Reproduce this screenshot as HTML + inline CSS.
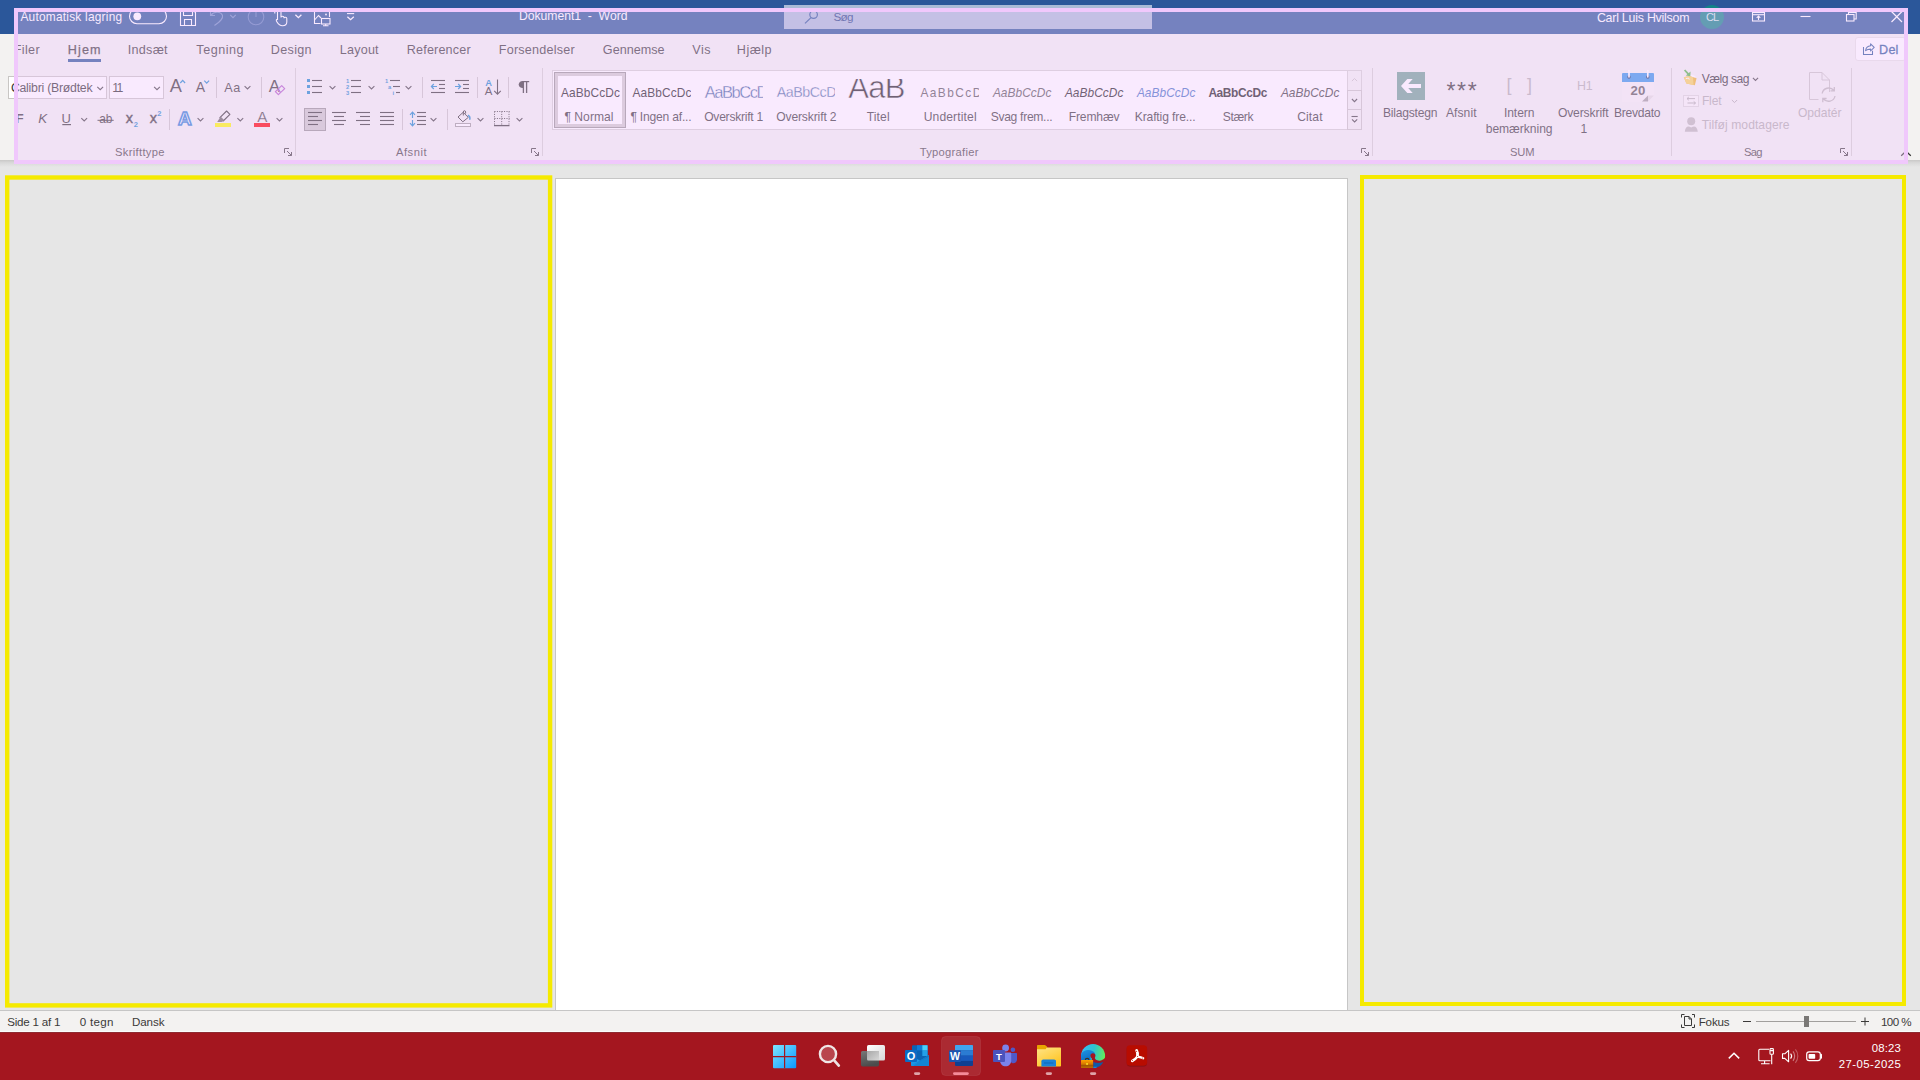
<!DOCTYPE html><html lang="da"><head><meta charset="utf-8"><title>Dokument1 - Word</title><style>
*{margin:0;padding:0;box-sizing:border-box}
html,body{width:1920px;height:1080px;overflow:hidden;background:#e6e6e6}
body{position:relative;font-family:"Liberation Sans",sans-serif;}
.a{position:absolute}
.t{position:absolute;white-space:pre;line-height:16px;height:16px}
svg{position:absolute;left:0;top:0;overflow:visible}
#titlebar{left:0;top:0;width:1920px;height:34px;background:#2b579a}
#ribbon{left:0;top:34px;width:1920px;height:126px;background:#f3f2f1}
#rshadow{left:0;top:160px;width:1920px;height:7px;background:linear-gradient(#c9c8c7,#d9d9d9 40%,#e6e6e6)}
#page{left:555px;top:178px;width:793px;height:833px;background:#fff;border:1px solid #c6c6c6;border-bottom:none}
#status{left:0;top:1010px;width:1920px;height:22px;background:#f3f2f1;border-top:1px solid #c6c6c6;border-bottom:1px solid #fbfbfb}
#taskbar{left:0;top:1032px;width:1920px;height:48px;background:#a4161f;border-top:1px solid #8e2a31}
#ov{left:14px;top:8px;width:1894px;height:156px;border:4px solid #f0c8fc;background:rgba(240,200,252,0.38)}
</style></head><body>
<div class="a" id="titlebar"></div><div class="a" id="ribbon"></div><div class="a" id="rshadow"></div>
<div class="a" id="page"></div><div class="a" id="status"></div><div class="a" id="taskbar"></div>
<span class="t" style="left:20.41px;top:9.00px;font-size:11.9px;color:#fff;letter-spacing:0.229px;">Automatisk lagring</span>
<span class="t" style="left:518.89px;top:8.00px;font-size:12.2px;color:#fff;letter-spacing:-0.013px;">Dokument1  -  Word</span>
<span class="t" style="left:1596.88px;top:10.00px;font-size:12.4px;color:#fff;letter-spacing:-0.233px;">Carl Luis Hvilsom</span>
<div class="a" style="left:784px;top:5px;width:368px;height:24px;background:#aabbd7"></div>
<span class="t" style="left:833.41px;top:9.00px;font-size:11.7px;color:#1f4585;letter-spacing:-0.644px;">Søg</span>
<div class="a" style="left:1700px;top:5px;width:24px;height:24px;border-radius:50%;background:#0f8387"></div>
<span class="t" style="left:1705.95px;top:9.00px;font-size:11px;color:#cfe8ea;letter-spacing:-0.962px;">CL</span>
<div class="a" style="left:1855px;top:37px;width:51px;height:24px;background:#fff;border:1px solid #e6e4e2;border-radius:3px"></div>
<svg width="1920" height="70" viewBox="0 0 1920 70" fill="none" stroke="#fff" stroke-width="1.1"><rect x="129.5" y="8.7" width="37" height="15" rx="7.5"/><circle cx="137.3" cy="16.3" r="3.9" fill="#fff" stroke="none"/><path d="M180.5 9.5H192.5L195.5 12.5V25.5H180.5Z"/><path d="M183.5 9.5V15.5H192.5V9.5"/><path d="M184.5 25.5V19.5H191.5V25.5"/><g stroke="#6f8ec3"><path d="M210.5 11V15.5H215"/><path d="M210.8 15.3C214 11 221 11.5 222.5 15.5C223.5 19 219 22 214.5 25.5"/></g><path d="M230.2 14.799999999999999L233 17.599999999999998L235.8 14.799999999999999" stroke="#6f8ec3" stroke-width="1.1" fill="none"/><g stroke="#5f81bb"><circle cx="256" cy="17" r="7.8"/><path d="M256 9V17"/></g><path d="M277.5 19.5V11.4C277.5 9.4 281 9.4 281 11.4V17.5C281 15.8 284 15.8 284 17.5V18.2C284 16.8 286.8 16.8 286.8 18.5V22C286.8 24.5 285 25.7 282.5 25.7C279.5 25.7 278.5 24.5 277 22C275.8 20.2 276.3 19 277.5 19.5Z"/><path d="M275 13.5C274.3 11.4 275.3 9.6 277 9"/><path d="M295.4 14.7L298.4 17.7L301.4 14.7" stroke="#fff" stroke-width="1.3" fill="none"/><path d="M320.5 23.5H314.5V11.5H329.5V17"/><path d="M314.5 20L318.5 15.5L321 18"/><circle cx="326" cy="14.5" r="0.9" fill="#fff" stroke="none"/><rect x="321.5" y="18.5" width="8.5" height="5.5"/><path d="M325.7 24V25.8M323 25.8H328.5"/><path d="M347 13.6H354.2"/><path d="M347.40000000000003 16.7L350.6 19.7L353.8 16.7" stroke="#fff" stroke-width="1.3" fill="none"/><g stroke="#2b579a" stroke-width="1.2"><circle cx="813.6" cy="14.6" r="3.8"/><path d="M811 17.6L805 23.4"/></g><rect x="1752.5" y="12.5" width="12" height="8.5"/><path d="M1752.5 14.7H1764.5"/><path d="M1758.5 20V16.2M1756.7 17.8L1758.5 16L1760.3 17.8"/><path d="M1800.5 16.5H1810.5"/><rect x="1846.5" y="14.5" width="7.5" height="6.5"/><path d="M1848.5 14.5V12.5H1856.2V19H1854"/><path d="M1891.5 11.5L1902 22M1902 11.5L1891.5 22" stroke-width="1.2"/><rect x="68" y="59" width="33" height="3" fill="#2b579a" stroke="none"/><g stroke="#2b579a" stroke-width="1.05"><path d="M1863.5 47V54.5H1872.5V50.8"/><path d="M1865.6 50.6C1866 47.8 1868 46 1870.6 45.8V43.8L1874.2 47.4L1870.6 51V49.1C1868.6 49.1 1866.9 49.6 1865.6 50.6Z" stroke-linejoin="round"/></g></svg>
<span class="t" style="left:13.87px;top:42.00px;font-size:12.6px;color:#3a3a3a;letter-spacing:0.315px;">Filer</span>
<span class="t" style="left:127.87px;top:42.00px;font-size:12.6px;color:#3a3a3a;letter-spacing:0.248px;">Indsæt</span>
<span class="t" style="left:196.37px;top:42.00px;font-size:12.6px;color:#3a3a3a;letter-spacing:0.520px;">Tegning</span>
<span class="t" style="left:270.87px;top:42.00px;font-size:12.6px;color:#3a3a3a;letter-spacing:0.308px;">Design</span>
<span class="t" style="left:339.87px;top:42.00px;font-size:12.6px;color:#3a3a3a;letter-spacing:0.186px;">Layout</span>
<span class="t" style="left:406.87px;top:42.00px;font-size:12.6px;color:#3a3a3a;letter-spacing:0.159px;">Referencer</span>
<span class="t" style="left:498.87px;top:42.00px;font-size:12.6px;color:#3a3a3a;letter-spacing:0.202px;">Forsendelser</span>
<span class="t" style="left:602.87px;top:42.00px;font-size:12.6px;color:#3a3a3a;letter-spacing:0.018px;">Gennemse</span>
<span class="t" style="left:692.37px;top:42.00px;font-size:12.6px;color:#3a3a3a;letter-spacing:0.492px;">Vis</span>
<span class="t" style="left:736.87px;top:42.00px;font-size:12.6px;color:#3a3a3a;letter-spacing:0.463px;">Hjælp</span>
<span class="t" style="left:67.87px;top:42.00px;font-size:12.6px;color:#3b3a39;letter-spacing:1.119px;-webkit-text-stroke:0.25px #3b3a39;">Hjem</span>
<span class="t" style="left:1879.07px;top:42.00px;font-size:12.6px;color:#2b579a;letter-spacing:0.227px;-webkit-text-stroke:0.3px #2b579a;">Del</span>
<div class="a" style="left:8px;top:76px;width:99px;height:23px;background:#fff;border:1px solid #c8c6c4"></div>
<div class="a" style="left:109px;top:76px;width:55px;height:23px;background:#fff;border:1px solid #c8c6c4"></div>
<span class="t" style="left:10.88px;top:80.00px;font-size:12.3px;color:#333;letter-spacing:-0.247px;">Calibri (Brødtek</span>
<span class="t" style="left:112.27px;top:80.00px;font-size:12.3px;color:#333;letter-spacing:-1.6px;">11</span>
<span class="t" style="left:15.48px;top:111.00px;font-size:13.4px;color:#3b3a39;font-weight:bold;">F</span>
<span class="t" style="left:38.33px;top:111.00px;font-size:13.4px;color:#3b3a39;font-style:italic;">K</span>
<span class="t" style="left:61.42px;top:111.00px;font-size:13px;color:#3b3a39;">U</span>
<span class="t" style="left:99.20px;top:111.00px;font-size:11.9px;color:#3b3a39;letter-spacing:-0.147px;">ab</span>
<span class="t" style="left:125.78px;top:110.00px;font-size:14.5px;color:#3b3a39;-webkit-text-stroke:0.4px #3b3a39;">x</span>
<span class="t" style="left:133.81px;top:117.00px;font-size:7.5px;color:#1e8bcd;font-weight:bold;">2</span>
<span class="t" style="left:149.78px;top:110.00px;font-size:14.5px;color:#3b3a39;-webkit-text-stroke:0.4px #3b3a39;">x</span>
<span class="t" style="left:157.31px;top:106.00px;font-size:7.5px;color:#1e8bcd;font-weight:bold;">2</span>
<span class="t" style="left:169.85px;top:78.00px;font-size:18.2px;color:#3b3a39;">A</span>
<span class="t" style="left:195.68px;top:79.00px;font-size:14px;color:#3b3a39;">A</span>
<span class="t" style="left:224.29px;top:80.00px;font-size:12.6px;color:#3b3a39;letter-spacing:0.508px;">Aa</span>
<span class="t" style="left:268.86px;top:79.00px;font-size:17px;color:#3b3a39;">A</span>
<span class="t" style="left:257.17px;top:109.00px;font-size:15.2px;color:#3b3a39;-webkit-text-stroke:0.18px #f3f2f1;">A</span>
<span class="t" style="left:177.98px;top:111.00px;font-size:19px;color:#fff;font-weight:bold;-webkit-text-stroke:1.5px #2f7fd3;text-shadow:0 0 1.5px #7fb2e8;">A</span>
<span class="t" style="left:114.94px;top:144.00px;font-size:11.2px;color:#484644;letter-spacing:0.327px;">Skrifttype</span>
<span class="t" style="left:395.94px;top:144.00px;font-size:11.2px;color:#484644;letter-spacing:0.522px;">Afsnit</span>
<svg width="1920" height="170" viewBox="0 0 1920 170" fill="none"><path d="M97.3 86.85L100.2 89.75L103.10000000000001 86.85" stroke="#444" stroke-width="1.1" fill="none"/><path d="M154.1 86.85L157 89.75L159.9 86.85" stroke="#444" stroke-width="1.1" fill="none"/><path d="M62.3 124.6H71" stroke="#3b3a39" stroke-width="1.2"/><path d="M81.3 118.05L84.2 120.95L87.10000000000001 118.05" stroke="#444" stroke-width="1.1" fill="none"/><path d="M97.5 120.3H113.7" stroke="#3b3a39" stroke-width="1"/><path d="M180.3 83L182.7 80.4L185.1 83" stroke="#1e8bcd" stroke-width="1.2"/><path d="M204.3 80.6L206.7 83.2L209.1 80.6" stroke="#1e8bcd" stroke-width="1.2"/><path d="M216.5 77V98" stroke="#c8c6c4" stroke-width="1"/><path d="M244.6 86.05L247.5 88.95L250.4 86.05" stroke="#444" stroke-width="1.1" fill="none"/><path d="M261.5 77V98" stroke="#c8c6c4" stroke-width="1"/><path d="M281.7 85.6L284.7 88.6L278.4 94.6L275.4 91.6Z" stroke="#b15fc7" stroke-width="1.2" stroke-linejoin="round"/><path d="M277.6 89.5L280.6 92.5" stroke="#b15fc7" stroke-width="1.1"/><path d="M169.5 109V130" stroke="#c8c6c4" stroke-width="1"/><path d="M197.6 118.05L200.5 120.95L203.4 118.05" stroke="#444" stroke-width="1.1" fill="none"/><path d="M237.4 118.05L240.3 120.95L243.20000000000002 118.05" stroke="#444" stroke-width="1.1" fill="none"/><path d="M276.6 118.05L279.5 120.95L282.4 118.05" stroke="#444" stroke-width="1.1" fill="none"/><path d="M226.6 111L229.9 114.3L223.2 121L219.9 117.7Z" stroke="#3b3a39" stroke-width="1.1" stroke-linejoin="round"/><path d="M220.8 116.8L224.1 120.1L223.2 121L221.6 121.9L217.2 122L219.9 117.7Z" fill="#6b6967"/><rect x="215" y="123" width="16" height="4" fill="#ffff00"/><rect x="254" y="123" width="16" height="4" fill="#ff0000"/><path d="M295.5 68V156" stroke="#d2d0ce" stroke-width="1"/><path d="M542.5 68V156" stroke="#d2d0ce" stroke-width="1"/><path d="M284.5 153V148.5H289" stroke="#484644" fill="none"/><path d="M287 151L291.5 155.5M288 155.5H291.5V152" stroke="#484644" fill="none"/><path d="M531.5 153V148.5H536" stroke="#484644" fill="none"/><path d="M534 151L538.5 155.5M535 155.5H538.5V152" stroke="#484644" fill="none"/><rect x="307" y="79.0" width="3" height="3" fill="#1e8bcd"/><path d="M312 80.5H322" stroke="#3b3a39" stroke-width="1.1"/><path d="M351 80.5H361" stroke="#3b3a39" stroke-width="1.1"/><rect x="307" y="85.0" width="3" height="3" fill="#1e8bcd"/><path d="M312 86.5H322" stroke="#3b3a39" stroke-width="1.1"/><path d="M351 86.5H361" stroke="#3b3a39" stroke-width="1.1"/><rect x="307" y="91.0" width="3" height="3" fill="#1e8bcd"/><path d="M312 92.5H322" stroke="#3b3a39" stroke-width="1.1"/><path d="M351 92.5H361" stroke="#3b3a39" stroke-width="1.1"/><path d="M329.6 86.05L332.5 88.95L335.4 86.05" stroke="#444" stroke-width="1.1" fill="none"/><path d="M368.6 86.05L371.5 88.95L374.4 86.05" stroke="#444" stroke-width="1.1" fill="none"/><path d="M405.6 86.05L408.5 88.95L411.4 86.05" stroke="#444" stroke-width="1.1" fill="none"/><path d="M390 80.5H400" stroke="#3b3a39" stroke-width="1.1"/><path d="M393 86.5H400" stroke="#3b3a39" stroke-width="1.1"/><path d="M396 92.5H400" stroke="#3b3a39" stroke-width="1.1"/><path d="M422.5 77V98" stroke="#c8c6c4" stroke-width="1"/><path d="M431 80.5H445" stroke="#3b3a39" stroke-width="1.1"/><path d="M431 92.5H445" stroke="#3b3a39" stroke-width="1.1"/><path d="M439 84.5H445" stroke="#3b3a39" stroke-width="1.1"/><path d="M439 88.5H445" stroke="#3b3a39" stroke-width="1.1"/><path d="M455 80.5H469" stroke="#3b3a39" stroke-width="1.1"/><path d="M455 92.5H469" stroke="#3b3a39" stroke-width="1.1"/><path d="M463 84.5H469" stroke="#3b3a39" stroke-width="1.1"/><path d="M463 88.5H469" stroke="#3b3a39" stroke-width="1.1"/><path d="M431.5 86.5H437M433.8 84L431.4 86.5L433.8 89" stroke="#1e8bcd" stroke-width="1.2"/><path d="M455 86.5H460.6M458.2 84L460.6 86.5L458.2 89" stroke="#1e8bcd" stroke-width="1.2"/><path d="M477.5 77V98" stroke="#c8c6c4" stroke-width="1"/><path d="M497.5 79.5V94M494.2 90.8L497.5 94.2L500.8 90.8" stroke="#3b3a39" stroke-width="1.1"/><path d="M508.5 77V98" stroke="#c8c6c4" stroke-width="1"/><path d="M523.6 81H522.6C520.4 81 518.7 82.5 518.7 84.6C518.7 86.7 520.4 88.1 522.6 88.1H523.6Z" fill="#3b3a39"/><path d="M522.6 81.6H529.2" stroke="#3b3a39" stroke-width="1.2"/><path d="M523.4 81.6V93M526.6 81.6V93" stroke="#3b3a39" stroke-width="1.3"/><rect x="304.5" y="108.5" width="21" height="22" fill="#cccac8" stroke="#979593"/><path d="M308 112.5H322" stroke="#3b3a39" stroke-width="1.1"/><path d="M332 112.5H346" stroke="#3b3a39" stroke-width="1.1"/><path d="M356 112.5H370" stroke="#3b3a39" stroke-width="1.1"/><path d="M380 112.5H394" stroke="#3b3a39" stroke-width="1.1"/><path d="M417 112.5H426" stroke="#3b3a39" stroke-width="1.1"/><path d="M308 116.5H318" stroke="#3b3a39" stroke-width="1.1"/><path d="M334 116.5H344" stroke="#3b3a39" stroke-width="1.1"/><path d="M360 116.5H370" stroke="#3b3a39" stroke-width="1.1"/><path d="M380 116.5H394" stroke="#3b3a39" stroke-width="1.1"/><path d="M417 116.5H426" stroke="#3b3a39" stroke-width="1.1"/><path d="M308 120.5H322" stroke="#3b3a39" stroke-width="1.1"/><path d="M332 120.5H346" stroke="#3b3a39" stroke-width="1.1"/><path d="M356 120.5H370" stroke="#3b3a39" stroke-width="1.1"/><path d="M380 120.5H394" stroke="#3b3a39" stroke-width="1.1"/><path d="M417 120.5H426" stroke="#3b3a39" stroke-width="1.1"/><path d="M308 124.5H318" stroke="#3b3a39" stroke-width="1.1"/><path d="M334 124.5H344" stroke="#3b3a39" stroke-width="1.1"/><path d="M360 124.5H370" stroke="#3b3a39" stroke-width="1.1"/><path d="M380 124.5H394" stroke="#3b3a39" stroke-width="1.1"/><path d="M417 124.5H426" stroke="#3b3a39" stroke-width="1.1"/><path d="M402.5 109V130" stroke="#c8c6c4" stroke-width="1"/><path d="M412.5 112.5V118M410 114.8L412.5 112.2L415 114.8M412.5 120V125.5M410 123.2L412.5 125.8L415 123.2" stroke="#1e8bcd" stroke-width="1.2"/><path d="M430.6 118.05L433.5 120.95L436.4 118.05" stroke="#444" stroke-width="1.1" fill="none"/><path d="M447.5 109V130" stroke="#c8c6c4" stroke-width="1"/><path d="M463.2 112.3L468.3 117.4L462.8 121.8L458 117Z" stroke="#3b3a39" stroke-width="1"/><path d="M463.3 115.5V112C463.3 110.2 465.6 110.2 465.6 112V113.6" stroke="#3b3a39" stroke-width="1"/><path d="M467.8 115.2C469.8 116 470.2 118 469.6 119.8" stroke="#1e8bcd" stroke-width="1.5"/><rect x="455.5" y="123.5" width="15" height="3" fill="#fff" stroke="#a19f9d"/><path d="M477.6 118.05L480.5 120.95L483.4 118.05" stroke="#444" stroke-width="1.1" fill="none"/><path d="M494.5 111.5H509.5M494.5 118.5H509.5M494.5 111.5V125M509 111.5V125M501.7 111.5V125" stroke="#3b3a39" stroke-width="1" stroke-dasharray="1 1.4"/><path d="M494 125.6H509.5" stroke="#3b3a39" stroke-width="1.3"/><path d="M516.6 118.05L519.5 120.95L522.4 118.05" stroke="#444" stroke-width="1.1" fill="none"/></svg>
<span class="t" style="left:345.90px;top:73.00px;font-size:5.8px;color:#1e8bcd;font-weight:bold;">1</span>
<span class="t" style="left:345.90px;top:79.00px;font-size:5.8px;color:#1e8bcd;font-weight:bold;">2</span>
<span class="t" style="left:345.90px;top:85.00px;font-size:5.8px;color:#1e8bcd;font-weight:bold;">3</span>
<span class="t" style="left:385.10px;top:73.00px;font-size:5.8px;color:#1e8bcd;font-weight:bold;">1</span>
<span class="t" style="left:387.90px;top:79.00px;font-size:5.8px;color:#1e8bcd;font-weight:bold;">a</span>
<span class="t" style="left:392.50px;top:85.00px;font-size:5.8px;color:#1e8bcd;font-weight:bold;">i</span>
<span class="t" style="left:485.16px;top:75.00px;font-size:9.4px;color:#1e8bcd;font-weight:bold;">A</span>
<span class="t" style="left:484.80px;top:83.00px;font-size:11.4px;color:#3b3a39;">A</span>
<div class="a" style="left:552px;top:70px;width:796px;height:60px;background:#fff;border:1px solid #d4d2d0"></div>
<div class="a" style="left:1347px;top:70px;width:15px;height:21px;background:#f3f2f1;border:1px solid #d4d2d0"></div>
<div class="a" style="left:1347px;top:90px;width:15px;height:20px;background:#f3f2f1;border:1px solid #c8c6c4"></div>
<div class="a" style="left:1347px;top:109px;width:15px;height:21px;background:#f3f2f1;border:1px solid #c8c6c4"></div>
<div class="a" style="left:554px;top:72px;width:72px;height:56px;border:1px solid #979593;background:#fff;box-shadow:inset 0 0 0 3px #d0cecc"></div>
<div class="a" style="left:558.3px;top:70.5px;width:61.7px;height:58.0px;overflow:hidden"><span class="t" style="left:2.60px;top:14.50px;font-size:11.9px;color:#222;letter-spacing:0.114px;">AaBbCcDc</span></div>
<div class="a" style="left:629.8px;top:70.5px;width:61.7px;height:58.0px;overflow:hidden"><span class="t" style="left:2.60px;top:14.50px;font-size:11.9px;color:#222;letter-spacing:0.114px;">AaBbCcDc</span></div>
<div class="a" style="left:702.3px;top:70.5px;width:61.0px;height:58.0px;overflow:hidden"><span class="t" style="left:2.45px;top:14.50px;font-size:16.6px;color:#2f5496;letter-spacing:-1.518px;-webkit-text-stroke:0.3px #fff;">AaBbCcDd</span></div>
<div class="a" style="left:774.3px;top:70.5px;width:61.0px;height:58.0px;overflow:hidden"><span class="t" style="left:2.52px;top:13.50px;font-size:14.3px;color:#2f5496;letter-spacing:-0.501px;-webkit-text-stroke:0.3px #fff;">AaBbCcDd</span></div>
<div class="a" style="left:846.3px;top:79px;width:59.7px;height:49.5px;overflow:hidden"><span class="t" style="left:1.97px;top:1.00px;font-size:31px;color:#222;letter-spacing:-0.764px;-webkit-text-stroke:0.55px #fff;">AaBb</span></div>
<div class="a" style="left:917.8px;top:70.5px;width:61.5px;height:58.0px;overflow:hidden"><span class="t" style="left:2.60px;top:14.50px;font-size:11.9px;color:#5a5a5a;letter-spacing:1.457px;">AaBbCcDd</span></div>
<div class="a" style="left:990.3px;top:70.5px;width:61.7px;height:58.0px;overflow:hidden"><span class="t" style="left:2.60px;top:14.50px;font-size:11.9px;color:#595959;letter-spacing:0.042px;font-style:italic;">AaBbCcDc</span></div>
<div class="a" style="left:1062.3px;top:70.5px;width:61.7px;height:58.0px;overflow:hidden"><span class="t" style="left:2.60px;top:14.50px;font-size:11.9px;color:#222;letter-spacing:0.042px;font-style:italic;">AaBbCcDc</span></div>
<div class="a" style="left:1134.3px;top:70.5px;width:61.7px;height:58.0px;overflow:hidden"><span class="t" style="left:2.60px;top:14.50px;font-size:11.9px;color:#4472c4;letter-spacing:0.042px;font-style:italic;">AaBbCcDc</span></div>
<div class="a" style="left:1205.8px;top:70.5px;width:62.2px;height:58.0px;overflow:hidden"><span class="t" style="left:2.60px;top:14.50px;font-size:11.9px;color:#222;letter-spacing:-0.358px;font-weight:bold;">AaBbCcDc</span></div>
<div class="a" style="left:1278.3px;top:70.5px;width:61.7px;height:58.0px;overflow:hidden"><span class="t" style="left:2.60px;top:14.50px;font-size:11.9px;color:#404040;letter-spacing:0.042px;font-style:italic;">AaBbCcDc</span></div>
<span class="t" style="left:564.39px;top:109.00px;font-size:12.1px;color:#3a3a3a;letter-spacing:0.051px;">¶ Normal</span>
<span class="t" style="left:630.39px;top:109.00px;font-size:12.1px;color:#3a3a3a;letter-spacing:-0.206px;">¶ Ingen af...</span>
<span class="t" style="left:704.19px;top:109.00px;font-size:12.1px;color:#3a3a3a;letter-spacing:-0.249px;">Overskrift 1</span>
<span class="t" style="left:776.19px;top:109.00px;font-size:12.1px;color:#3a3a3a;letter-spacing:-0.131px;">Overskrift 2</span>
<span class="t" style="left:866.69px;top:109.00px;font-size:12.1px;color:#3a3a3a;letter-spacing:0.125px;">Titel</span>
<span class="t" style="left:923.69px;top:109.00px;font-size:12.1px;color:#3a3a3a;letter-spacing:0.125px;">Undertitel</span>
<span class="t" style="left:990.69px;top:109.00px;font-size:12.1px;color:#3a3a3a;letter-spacing:-0.302px;">Svag frem...</span>
<span class="t" style="left:1068.69px;top:109.00px;font-size:12.1px;color:#3a3a3a;letter-spacing:-0.143px;">Fremhæv</span>
<span class="t" style="left:1134.69px;top:109.00px;font-size:12.1px;color:#3a3a3a;letter-spacing:-0.125px;">Kraftig fre...</span>
<span class="t" style="left:1222.69px;top:109.00px;font-size:12.1px;color:#3a3a3a;letter-spacing:-0.340px;">Stærk</span>
<span class="t" style="left:1297.19px;top:109.00px;font-size:12.1px;color:#3a3a3a;letter-spacing:0.133px;">Citat</span>
<span class="t" style="left:919.74px;top:144.00px;font-size:11.2px;color:#484644;letter-spacing:0.279px;">Typografier</span>
<svg width="1920" height="170" viewBox="0 0 1920 170" fill="none"><path d="M1351.9 81.1L1354.5 78.5L1357.1 81.1" stroke="#c8c6c4" stroke-width="1.0" fill="none"/><path d="M1351.9 99.0L1354.5 101.6L1357.1 99.0" stroke="#444" stroke-width="1.1" fill="none"/><path d="M1351.5 116.5H1357.7" stroke="#444" stroke-width="1.1"/><path d="M1352.0 119.3L1354.6 121.89999999999999L1357.1999999999998 119.3" stroke="#444" stroke-width="1.1" fill="none"/><path d="M1361.5 153V148.5H1366" stroke="#484644" fill="none"/><path d="M1364 151L1368.5 155.5M1365 155.5H1368.5V152" stroke="#484644" fill="none"/><path d="M1372.5 68V156" stroke="#d2d0ce" stroke-width="1"/></svg>
<div class="a" style="left:1397px;top:72px;width:28px;height:28px;background:#72a395"></div>
<span class="t" style="left:1382.89px;top:105.00px;font-size:12.1px;color:#3a3a3a;letter-spacing:-0.200px;">Bilagstegn</span>
<span class="t" style="left:1446.48px;top:83.00px;font-size:23px;color:#3b3a39;letter-spacing:1.699px;">***</span>
<span class="t" style="left:1445.89px;top:105.00px;font-size:12.1px;color:#3a3a3a;letter-spacing:0.090px;">Afsnit</span>
<span class="t" style="left:1506.40px;top:77.00px;font-size:18px;color:#b4b2b0;">[</span>
<span class="t" style="left:1527.05px;top:77.00px;font-size:18px;color:#b4b2b0;">]</span>
<span class="t" style="left:1503.89px;top:105.00px;font-size:12.1px;color:#3a3a3a;letter-spacing:-0.046px;">Intern</span>
<span class="t" style="left:1485.69px;top:121.00px;font-size:12.1px;color:#3a3a3a;letter-spacing:-0.038px;">bemærkning</span>
<span class="t" style="left:1576.88px;top:78.00px;font-size:12.4px;color:#b4b2b0;letter-spacing:-0.111px;">H1</span>
<span class="t" style="left:1557.89px;top:105.00px;font-size:12.1px;color:#3a3a3a;letter-spacing:-0.117px;">Overskrift</span>
<span class="t" style="left:1580.49px;top:121.00px;font-size:12.1px;color:#3a3a3a;">1</span>
<span class="t" style="left:1613.89px;top:105.00px;font-size:12.1px;color:#3a3a3a;letter-spacing:-0.246px;">Brevdato</span>
<span class="t" style="left:1509.94px;top:144.00px;font-size:11.2px;color:#484644;letter-spacing:-0.134px;">SUM</span>
<div class="a" style="left:1622px;top:74px;width:32px;height:27.5px;background:#f5f4f3"></div>
<div class="a" style="left:1622px;top:73px;width:32px;height:8.7px;background:#3797e8;border-radius:1px 1px 0 0"></div>
<span class="t" style="left:1630.45px;top:83.00px;font-size:13.2px;color:#5c5a58;font-weight:bold;letter-spacing:0.3px;">20</span>
<span class="t" style="left:1701.69px;top:71.00px;font-size:12.1px;color:#333;letter-spacing:-0.458px;">Vælg sag</span>
<span class="t" style="left:1701.89px;top:93.00px;font-size:12.1px;color:#b1afad;letter-spacing:-0.154px;">Flet</span>
<span class="t" style="left:1701.69px;top:117.00px;font-size:12.1px;color:#b1afad;letter-spacing:0.063px;">Tilføj modtagere</span>
<span class="t" style="left:1797.89px;top:105.00px;font-size:12.1px;color:#b1afad;">Opdatér</span>
<span class="t" style="left:1743.94px;top:144.00px;font-size:11.2px;color:#484644;letter-spacing:-0.654px;">Sag</span>
<svg width="1920" height="170" viewBox="0 0 1920 170" fill="none"><path d="M1401 86L1407.3 79H1412.7L1408.2 84H1421V88H1408.2L1412.7 93H1407.3Z" fill="#fff"/><circle cx="1629" cy="77" r="1.7" fill="#1f3864"/><circle cx="1647.8" cy="77" r="1.7" fill="#1f3864"/><path d="M1629 70.5V76.8M1647.8 70.5V76.8" stroke="#fff" stroke-width="1.7" stroke-linecap="round"/><path d="M1654 95.5V101.7H1648Z" fill="#f3f2f1"/><path d="M1648 95.5H1654L1648 101.5Z" fill="#e3e1df"/><path d="M1642 101.5L1648 95.5V101.5Z" fill="#a19f9d"/><path d="M1671.5 68V156" stroke="#d2d0ce" stroke-width="1"/><path d="M1851.5 68V156" stroke="#d2d0ce" stroke-width="1"/><path d="M1690.5 74.5L1695.5 76L1694.5 80H1690Z" fill="#fff"/><path d="M1683.8 77.2L1689.5 76L1696.6 78.2L1694.8 85.2L1686.4 83.4Z" fill="#efb92c"/><path d="M1683.8 77.2L1689.5 76L1693 77.2L1693.6 84.9L1686.4 83.4Z" fill="#f8d75c"/><path d="M1685.8 78.6L1688.6 78L1689.2 79.6" stroke="#fff" stroke-width="1"/><path d="M1684.6 70L1689.3 75.2" stroke="#54b948" stroke-width="1.8"/><path d="M1690.6 71.6L1690.3 76.2L1685.8 75.6Z" fill="#54b948"/><path d="M1752.9 77.9L1755.5 80.5L1758.1 77.9" stroke="#444" stroke-width="1.1" fill="none"/><rect x="1683.5" y="95.5" width="15" height="11" stroke="#dcdad8" fill="#f8f7f6"/><path d="M1687 98.6H1695M1688.8 97L1687 98.6L1688.8 100.2M1695.5 103H1687.5M1693.7 101.4L1695.5 103L1693.7 104.6" stroke="#b1afad" stroke-width="1"/><path d="M1731.9 100.0L1734.5 102.6L1737.1 100.0" stroke="#b1afad" stroke-width="1.0" fill="none"/><circle cx="1691.2" cy="121.3" r="4" fill="#bdbbb9"/><path d="M1684.8 131.7C1685.5 126.5 1688 125.6 1691.2 127.6C1694.4 125.6 1697 126.5 1697.8 131.7Z" fill="#bdbbb9"/><path d="M1809.5 72.5H1822L1829.5 80V92M1818.5 99.5H1809.5V72.5M1822 72.5V80H1829.5" stroke="#c8c6c4" stroke-width="1"/><path d="M1822.2 93.5C1823 88 1830 86 1834 90.5M1834.3 87V90.8H1830.5M1835 96C1834 101.5 1827 103 1823.2 98.8M1822.8 102.3V98.5H1826.6" stroke="#bbb9b7" stroke-width="1.3"/><path d="M1840.5 153V148.5H1845" stroke="#484644" fill="none"/><path d="M1843 151L1847.5 155.5M1844 155.5H1847.5V152" stroke="#484644" fill="none"/><path d="M1901.2 155.8L1906 151.2L1910.8 155.8" stroke="#333" stroke-width="1.2"/></svg>
<span class="t" style="left:7.22px;top:1014.00px;font-size:11.6px;color:#3b3a39;letter-spacing:-0.210px;">Side 1 af 1</span>
<span class="t" style="left:79.72px;top:1014.00px;font-size:11.6px;color:#3b3a39;letter-spacing:0.322px;">0 tegn</span>
<span class="t" style="left:131.92px;top:1014.00px;font-size:11.6px;color:#3b3a39;letter-spacing:-0.055px;">Dansk</span>
<span class="t" style="left:1698.72px;top:1014.00px;font-size:11.6px;color:#3b3a39;letter-spacing:-0.182px;">Fokus</span>
<span class="t" style="left:1880.92px;top:1014.00px;font-size:11.6px;color:#3b3a39;letter-spacing:-0.558px;">100 %</span>
<svg width="1920" height="1080" viewBox="0 0 1920 1080" fill="none"><path d="M1681.5 1017.5V1014.5H1684.5M1692 1014.5H1694.5V1017.5M1694.5 1024.5V1027.5H1692M1684.5 1027.5H1681.5V1024.5" stroke="#3b3a39" stroke-width="1"/><path d="M1684.5 1016.5H1689L1691.5 1019V1025.5H1684.5ZM1689 1016.5V1019H1691.5" stroke="#3b3a39" stroke-width="1"/><path d="M1743 1021.5H1751" stroke="#3b3a39" stroke-width="1"/><path d="M1756 1021.5H1856" stroke="#a19f9d" stroke-width="1"/><rect x="1804" y="1016" width="5" height="11" fill="#7a7876"/><path d="M1861 1021.5H1869M1865 1017.5V1025.5" stroke="#3b3a39" stroke-width="1"/></svg>
<svg width="1920" height="1080" viewBox="0 0 1920 1080" fill="none"><defs><linearGradient id="gw" x1="0" y1="0" x2="1" y2="1"><stop offset="0" stop-color="#7ee6ff"/><stop offset="1" stop-color="#0a96ff"/></linearGradient><linearGradient id="gtv" x1="0" y1="0" x2="1" y2="1"><stop offset="0" stop-color="#ffffff"/><stop offset="1" stop-color="#d6d6d6"/></linearGradient><linearGradient id="gfo" x1="0" y1="0" x2="0.6" y2="1"><stop offset="0" stop-color="#ffe58a"/><stop offset="1" stop-color="#ffc524"/></linearGradient><linearGradient id="ged" x1="0" y1="0.3" x2="1" y2="0.5"><stop offset="0" stop-color="#38bdf8"/><stop offset="0.5" stop-color="#2ec4cf"/><stop offset="1" stop-color="#66ee55"/></linearGradient><linearGradient id="ged2" x1="0" y1="0" x2="0.5" y2="1"><stop offset="0" stop-color="#1f93e2"/><stop offset="1" stop-color="#0c6cc4"/></linearGradient><linearGradient id="gbc" x1="0" y1="0" x2="0" y2="1"><stop offset="0" stop-color="#ffa200"/><stop offset="0.3" stop-color="#e88a00"/><stop offset="0.55" stop-color="#d07600"/><stop offset="0.62" stop-color="#9a4e00"/><stop offset="0.72" stop-color="#a85c00"/><stop offset="1" stop-color="#bd6c00"/></linearGradient><linearGradient id="gtv2" x1="0" y1="0" x2="0.3" y2="1"><stop offset="0" stop-color="#787878"/><stop offset="1" stop-color="#4c4c4c"/></linearGradient><linearGradient id="gtv3" x1="0" y1="0" x2="1" y2="1"><stop offset="0" stop-color="#a8a8a8"/><stop offset="1" stop-color="#d8d8d8"/></linearGradient></defs><g><rect x="773" y="1045" width="23.2" height="23.2" rx="1" fill="url(#gw)"/><path d="M784.6 1045V1068.2M773 1056.6H796.2" stroke="#a4161f" stroke-width="1.2"/></g><circle cx="828" cy="1054" r="8.1" fill="#b9454d" stroke="#f0e6e6" stroke-width="2.4"/><path d="M834.2 1060.4L838.8 1065.6" stroke="#efe3e3" stroke-width="2.7" stroke-linecap="round"/><rect x="867" y="1045" width="18" height="15.6" rx="1.6" fill="url(#gtv)"/><rect x="861" y="1051" width="18" height="15.4" rx="1.6" fill="url(#gtv2)"/><path d="M867 1051H879V1060.6H868.6C867.6 1060.6 867 1060 867 1059Z" fill="url(#gtv3)"/><rect x="912" y="1045.2" width="15.6" height="17" rx="1" fill="#0a64b4"/><rect x="917" y="1045.2" width="5.3" height="5.4" fill="#0f7bd6"/><rect x="922.3" y="1045.2" width="5.3" height="5.4" fill="#48d0fc"/><rect x="917" y="1050.6" width="5.3" height="5.4" fill="#0a64b4"/><rect x="922.3" y="1050.6" width="5.3" height="5.4" fill="#22a0e8"/><path d="M911 1056L920 1060.5L929 1055V1065C929 1065.6 928.6 1066 928 1066H912C911.4 1066 911 1065.6 911 1065Z" fill="#1a96e4"/><path d="M929 1055.2V1066H913Z" fill="#1484d2"/><path d="M911.2 1066L929 1056.5V1055L920 1060.5Z" fill="#0d6cbc" fill-opacity=".55"/><rect x="905" y="1050" width="12" height="12" rx="1" fill="#0b6cc4"/><rect x="941.5" y="1036.5" width="39" height="39" rx="4" fill="#fff" fill-opacity="0.085" stroke="#fff" stroke-opacity="0.07"/><rect x="955" y="1045" width="18" height="21" rx="1" fill="#103f91"/><path d="M956 1045H972C972.6 1045 973 1045.4 973 1046V1050.4H955V1046C955 1045.4 955.4 1045 956 1045Z" fill="#41a5ee"/><rect x="955" y="1050.4" width="18" height="5.3" fill="#2b7cd3"/><rect x="955" y="1055.7" width="18" height="5.2" fill="#185abd"/><rect x="949" y="1050.2" width="12" height="11.8" rx="1" fill="#1a55b0"/><circle cx="1012.9" cy="1049.8" r="2.3" fill="#5059c9"/><path d="M1009 1053H1016C1016.6 1053 1017 1053.4 1017 1054V1059.5C1017 1062 1015 1063.4 1012.6 1063.2L1009 1061Z" fill="#5059c9"/><circle cx="1005.6" cy="1048" r="3.4" fill="#7b83eb"/><path d="M1000 1052.6H1010.2C1010.8 1052.6 1011.2 1053 1011.2 1053.6V1060.5C1011.2 1064 1008.8 1066.3 1005.6 1066.3C1002.4 1066.3 1000 1064 1000 1060.5Z" fill="#7b83eb"/><rect x="993" y="1050" width="12" height="12" rx="1" fill="#4b53bc"/><path d="M1037 1046.8H1046.3L1047.5 1047.6H1060C1060.6 1047.6 1061 1048 1061 1048.6V1065.5C1061 1066.1 1060.6 1066.5 1060 1066.5H1038C1037.4 1066.5 1037 1066.1 1037 1065.5Z" fill="url(#gfo)"/><path d="M1037 1046C1037 1045.4 1037.4 1045 1038 1045H1044.6C1045 1045 1045.4 1045.2 1045.7 1045.5L1047.2 1047L1045.6 1049.2H1037Z" fill="#e8a400"/><path d="M1041.4 1061.3C1041.4 1060.3 1042.2 1059.5 1043.2 1059.5H1054.2C1055.2 1059.5 1056 1060.3 1056 1061.3V1066.5H1041.4Z" fill="#1b82d8"/><path d="M1044 1063H1053.4" stroke="#1267b5" stroke-width="1"/><circle cx="1093.1" cy="1056" r="12" fill="url(#ged)"/><path d="M1081.1 1061V1055C1081.8 1051.6 1086 1049.6 1090 1050.2C1093.3 1050.7 1095.5 1052.8 1095.3 1055.5C1094 1053.3 1091 1053.6 1090.5 1057V1061Z" fill="url(#ged2)"/><path d="M1094.8 1056.6C1094.4 1059.4 1096.5 1060.8 1099.5 1060.7C1101.6 1060.6 1103.6 1059.6 1105.2 1057.8L1106.5 1060L1104 1067L1094 1069.5L1092 1068.5L1091.7 1057Z" fill="#a4161f"/><path d="M1093.3 1061.7C1096 1063.3 1100.4 1063.3 1103.4 1061.7C1101.9 1065.5 1097.8 1068 1093.3 1068Z" fill="#0e5aa6"/><path d="M1093.3 1066.8H1097.2L1096 1068H1093.3Z" fill="#1b86d8"/><circle cx="1092.9" cy="1055.7" r="2.5" fill="#a4161f"/><path d="M1085.3 1060.2C1085.3 1057.8 1089 1057.8 1089 1060.2" stroke="#3a3426" stroke-width="1.1"/><rect x="1081" y="1060" width="12.1" height="8" rx=".6" fill="url(#gbc)"/><rect x="1086.1" y="1063" width="1.9" height="1.9" fill="#f9cf1c"/><rect x="1126.8" y="1046" width="20.2" height="20.6" rx="3.6" fill="#7d1118"/><rect x="1126.5" y="1045.3" width="20.6" height="20.5" rx="3.5" fill="#b80c00"/><g stroke="#fff" stroke-linecap="round" fill="none"><path d="M1137.5 1056.6C1137.8 1054.4 1137.6 1052 1136.6 1050.3" stroke-width="2.7"/><path d="M1137.5 1056.6C1136 1058.6 1134.2 1060.2 1132.2 1061" stroke-width="2.5"/><path d="M1137.5 1056.6C1139.5 1057 1141.4 1057.4 1143.2 1058.3" stroke-width="2.2"/></g><g fill="#b80c00"><circle cx="1136.6" cy="1051.3" r=".55"/><circle cx="1132.4" cy="1060.5" r=".5"/><circle cx="1142.3" cy="1057.9" r=".5"/><circle cx="1137.6" cy="1056.5" r=".5"/></g><rect x="914" y="1072.3" width="6.2000000000000455" height="2.6" rx="1.3" fill="#dfa3a8"/><rect x="953" y="1072.3" width="15.799999999999955" height="2.6" rx="1.3" fill="#f58b99"/><rect x="1045.8" y="1072.3" width="6.2000000000000455" height="2.6" rx="1.3" fill="#dfa3a8"/><rect x="1090" y="1072.3" width="6.2000000000000455" height="2.6" rx="1.3" fill="#dfa3a8"/><path d="M1728.8 1058.4L1734 1053.3L1739.2 1058.4" stroke="#fff" stroke-width="1.5"/><g stroke="#fff" stroke-width="1.1"><path d="M1769 1049.2H1759.8C1759.2 1049.2 1758.8 1049.6 1758.8 1050.2V1059.8C1758.8 1060.4 1759.2 1060.8 1759.8 1060.8H1770.5"/><path d="M1764.6 1061V1063.6M1761 1063.7H1769.6"/><rect x="1770" y="1048.6" width="3.4" height="5.6" rx=".8"/><path d="M1770.2 1050.6H1773.2M1771.7 1054.2V1064.2"/></g><g stroke="#fff" stroke-width="1.1"><path d="M1782.5 1053.8H1784.8L1788.6 1050.4V1061.8L1784.8 1058.4H1782.5Z" stroke-linejoin="round"/><path d="M1790.6 1053.6C1791.8 1055 1791.8 1057.2 1790.6 1058.6"/><path d="M1793 1051.4C1795.2 1054 1795.2 1058.2 1793 1060.8" stroke-opacity=".45"/><path d="M1795.4 1049.4C1798.6 1053 1798.6 1059.2 1795.4 1062.8" stroke-opacity=".3"/></g><rect x="1806.7" y="1051.9" width="13.6" height="8.8" rx="2.4" stroke="#fff" stroke-width="1.2"/><rect x="1808.6" y="1053.9" width="6.6" height="4.8" rx=".8" fill="#fff"/><path d="M1821.2 1054.6V1058" stroke="#fff" stroke-width="1.6" stroke-linecap="round"/></svg>
<span class="t" style="left:906.74px;top:1048.00px;font-size:11px;color:#fff;font-weight:bold;">O</span>
<span class="t" style="left:949.91px;top:1048.00px;font-size:10.6px;color:#fff;font-weight:bold;">W</span>
<span class="t" style="left:996.04px;top:1049.00px;font-size:9.6px;color:#fff;font-weight:bold;">T</span>
<span class="t" style="left:1871.83px;top:1040.00px;font-size:11.4px;color:#fff;letter-spacing:0.131px;">08:23</span>
<span class="t" style="left:1838.83px;top:1056.00px;font-size:11.4px;color:#fff;letter-spacing:0.415px;">27-05-2025</span>
<div class="a" id="ov"></div>
<svg width="1920" height="1080" viewBox="0 0 1920 1080"><g fill="none" stroke="#f5ea00"><rect x="7.2" y="177.5" width="542.9" height="827.9" stroke-width="4.4"/><rect x="1362" y="177" width="542" height="827" stroke-width="4"/></g></svg>
</body></html>
